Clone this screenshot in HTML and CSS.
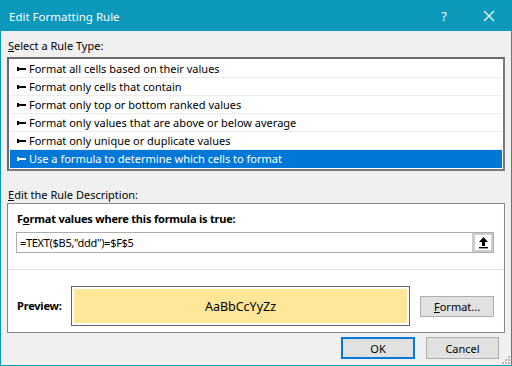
FILE: index.html
```html
<!DOCTYPE html>
<html lang="en">
<head>
  <meta charset="UTF-8">
  <title>Edit Formatting Rule</title>
  <link rel="stylesheet" href="styles.css">
</head>
<body>
  <div class="dialog">
    <div class="titlebar">
      <span class="title">Edit Formatting Rule</span>
      <span class="help">?</span>
      <span class="close">
        <svg width="12" height="12" viewBox="0 0 12 12"><path d="M1 1 L11 11 M11 1 L1 11" stroke="#fff" stroke-width="1.2" fill="none"/></svg>
      </span>
    </div>

    <div class="content">
      <div class="label"><u>S</u>elect a Rule Type:</div>
      <ul class="rule-list">
        <li><i class="bullet"></i>Format all cells based on their values</li>
        <li><i class="bullet"></i>Format only cells that contain</li>
        <li><i class="bullet"></i>Format only top or bottom ranked values</li>
        <li><i class="bullet"></i>Format only values that are above or below average</li>
        <li><i class="bullet"></i>Format only unique or duplicate values</li>
        <li class="selected"><i class="bullet"></i>Use a formula to determine which cells to format</li>
      </ul>

      <div class="label label-desc"><u>E</u>dit the Rule Description:</div>
      <div class="group">
        <div class="group-top">
          <div class="bold">F<u>o</u>rmat values where this formula is true:</div>
          <div class="formula">
            <span class="formula-text">=TEXT($B5,"ddd")=$F$5</span>
            <span class="collapse">
              <svg width="11" height="13" viewBox="0 0 11 13"><path d="M5.5 1 L10 6 L7 6 L7 10 L4 10 L4 6 L1 6 Z" fill="#000"/><rect x="1" y="11" width="9" height="1.4" fill="#000"/></svg>
            </span>
          </div>
        </div>
        <div class="group-bottom">
          <span class="bold preview-label">Preview:</span>
          <div class="preview"><div class="sample">AaBbCcYyZz</div></div>
          <button class="btn btn-format"><u>F</u>ormat...</button>
        </div>
      </div>

      <div class="actions">
        <button class="btn btn-ok">OK</button>
        <button class="btn btn-cancel">Cancel</button>
      </div>

      <svg class="grip" width="10" height="10" viewBox="0 0 10 10">
        <rect x="8" y="2" width="2" height="2" fill="#b8b8b8"/>
        <rect x="5" y="5" width="2" height="2" fill="#b8b8b8"/>
        <rect x="8" y="5" width="2" height="2" fill="#b8b8b8"/>
        <rect x="2" y="8" width="2" height="2" fill="#b8b8b8"/>
        <rect x="5" y="8" width="2" height="2" fill="#b8b8b8"/>
        <rect x="8" y="8" width="2" height="2" fill="#b8b8b8"/>
      </svg>
    </div>
  </div>
</body>
</html>
```

FILE: styles.css
```css
body {
  margin: 0;
  padding: 0;
  font-family: "Noto Sans", "Open Sans", sans-serif;
  font-size: 11px;
  color: #000;
}

.dialog {
  width: 512px;
  height: 366px;
  box-sizing: border-box;
  border: 1px solid #0a98bb;
  background-color: #f0f0f0;
  display: flex;
  flex-direction: column;
  position: relative;
}

.titlebar {
  height: 30px;
  background-color: #0a98bb;
  color: #fff;
  display: flex;
  align-items: center;
  padding-left: 8px;
}

.title {
  flex: 1;
  font-size: 11.5px;
}

.help {
  width: 14px;
  text-align: center;
  font-size: 13px;
  margin-right: 32px;
}

.close {
  display: flex;
  margin-right: 16px;
}

.content {
  flex: 1;
  padding: 7px 0 0 6px;
}

.label {
  padding-left: 1px;
  line-height: 16px;
  height: 16px;
  margin-bottom: 3px;
}

.label-desc {
  margin-top: 16px;
  margin-bottom: 0;
}

/* rule type list box */
.rule-list {
  list-style: none;
  margin: 0;
  padding: 1px;
  width: 498px;
  box-sizing: border-box;
  border: 2px solid #7a7a7a;
  border-top-color: #6a6a6a;
  border-left-color: #6a6a6a;
  background-color: #fff;
}

.rule-list li {
  height: 17px;
  line-height: 17px;
  border-bottom: 1px solid #ececec;
  padding-left: 7px;
  display: flex;
  align-items: center;
  white-space: nowrap;
}

.rule-list li.selected {
  background-color: #0078d7;
  color: #fff;
  border-bottom-color: #0078d7;
}

.bullet {
  display: inline-block;
  width: 9px;
  height: 4px;
  margin-right: 3px;
  background:
    linear-gradient(#000, #000) 0 0 / 2px 4px no-repeat,
    linear-gradient(#000, #000) 0 1px / 9px 2px no-repeat;
}

.selected .bullet {
  background:
    linear-gradient(#fff, #fff) 0 0 / 2px 4px no-repeat,
    linear-gradient(#fff, #fff) 0 1px / 9px 2px no-repeat;
}

/* rule description group */
.group {
  width: 498px;
  box-sizing: border-box;
  border: 1px solid #828790;
  background-color: #fff;
}

.group-top {
  height: 58px;
  padding: 7px 10px 0 8px;
  border-bottom: 1px solid #e3e3e3;
}

.bold {
  font-weight: bold;
  line-height: 16px;
  padding-left: 1px;
  letter-spacing: -0.2px;
}

.formula {
  margin-top: 5px;
  height: 21px;
  box-sizing: border-box;
  border: 1px solid #acacac;
  display: flex;
  align-items: stretch;
}

.formula-text {
  flex: 1;
  padding-left: 3px;
  line-height: 19px;
  letter-spacing: -0.3px;
}

.collapse {
  width: 21px;
  box-sizing: border-box;
  border: 2px solid #cdcdcd;
  border-left: 3px solid #cdcdcd;
  display: flex;
  align-items: center;
  justify-content: center;
  background-color: #fff;
}

.group-bottom {
  display: flex;
  align-items: center;
  padding: 16px 10px 6px 9px;
}

.preview-label {
  width: 54px;
  padding-left: 0;
}

.preview {
  width: 340px;
  height: 40px;
  box-sizing: border-box;
  border: 1px solid #646464;
  padding: 2px;
  background-color: #fff;
}

.sample {
  height: 100%;
  background-color: #ffe699;
  display: flex;
  align-items: center;
  justify-content: center;
  font-size: 12.5px;
}

.btn {
  font-family: "Noto Sans", "Open Sans", sans-serif;
  font-size: 11px;
  color: #000;
  background-color: #e1e1e1;
  border: 1px solid #adadad;
  padding: 0;
  height: 21px;
  box-sizing: border-box;
}

.btn-format {
  width: 74px;
  margin-left: 10px;
}

.actions {
  display: flex;
  justify-content: flex-end;
  gap: 11px;
  padding-right: 12px;
  margin-top: 4px;
}

.btn-ok {
  width: 74px;
  height: 22px;
  border: 2px solid #0078d7;
}

.btn-cancel {
  width: 73px;
  height: 22px;
}

.grip {
  position: absolute;
  right: 1px;
  bottom: 1px;
}
```
